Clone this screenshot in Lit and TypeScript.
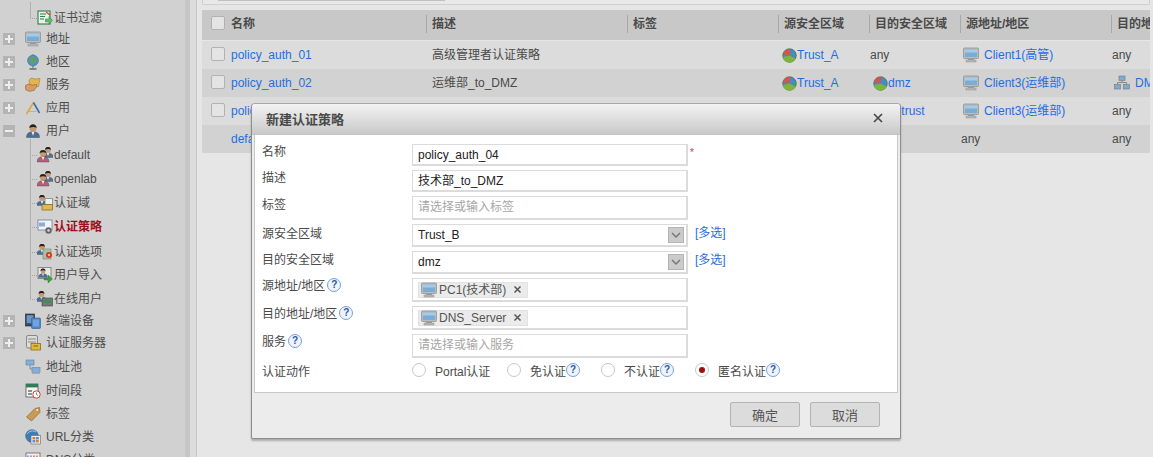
import { LitElement, html, css, svg, TemplateResult } from "lit";
import { customElement } from "lit/decorators.js";
import { classMap } from "lit/directives/class-map.js";

const ic = (body: unknown, size = 16) =>
  html`<svg class="ic" width="${size}" height="${size}" viewBox="0 0 16 16">${body}</svg>`;

const person = (x: number, y: number, coat = "#4a6f96", s = 1.25) => svg`
  <g transform="translate(${x} ${y}) scale(${s})">
  <path d="M-5 10c0-3.2 2-4.4 5-4.4s5 1.2 5 4.4z" fill="${coat}" stroke="#2f3f50" stroke-width=".3"/>
  <path d="M-1.2 5.6h2.4l-1.2 3z" fill="#eee"/>
  <circle cx="0" cy="2.8" r="2.7" fill="#c89a74"/>
  <path d="M-2.8 2.6c0-3.6 5.6-3.6 5.6 0c-1.4-1-3.8-1-5.6 0z" fill="#222"/></g>`;

const icons: Record<string, () => TemplateResult> = {
  monitor: () => ic(svg`
    <rect x="0.5" y="1" width="15" height="10.5" rx="1" fill="#bcbcbc" stroke="#8b8b8b" stroke-width=".7"/>
    <rect x="2" y="2.5" width="12" height="7.5" fill="#79add6"/>
    <rect x="2" y="2.5" width="12" height="3" fill="#a5cbe6"/>
    <rect x="5" y="11.5" width="6" height="1.5" fill="#9c9c9c"/>
    <rect x="3" y="13" width="10" height="2" fill="#bbb" stroke="#8f8f8f" stroke-width=".5"/>`),
  globe: () => ic(svg`
    <circle cx="8" cy="6.5" r="5.4" fill="#4f93c4" stroke="#3a6d90" stroke-width=".6"/>
    <path d="M5 3.4l3-1 1.4 1.8-1.6 2 1.4 2.4-1.6 2-1.2-2.6-2-1.2zM10 5.6l2.4-.6.4 2.6-1.8 1.4z" fill="#6da243"/>
    <path d="M8 .3v1M8 12v2" stroke="#666"/><path d="M4.5 15h7" stroke="#666" stroke-width="1.5"/>`),
  service: () => ic(svg`
    <path d="M4 3.5l2-2.5 4 1 5-.5-1.5 8-8 .8z" fill="#e3b552" stroke="#a67e2a" stroke-width=".6"/>
    <path d="M.5 8.5l3-1.5 4 1.2 4-.8.4 1.8-2.6 4-4.6 1.2-4-1.6z" fill="#d89b62" stroke="#8f6235" stroke-width=".6"/>`),
  app: () => ic(svg`
    <path d="M1.5 14L8.5 2.5" stroke="#e0a82c" stroke-width="1.6"/>
    <path d="M8.5 2.5L14.5 13" stroke="#3d6ca8" stroke-width="1.6"/>
    <path d="M3.5 11.5h8" stroke="#aaa" stroke-width=".8"/>`),
  user: () => ic(svg`${person(8, 1.5, "#4a6f96", 1.3)}`),
  pair: () => ic(svg`${person(11, 0, "#5a6f88", 1.05)}${person(6, 3, "#b45f74", 1.2)}`),
  domain: () => ic(svg`${person(5, 0, "#4a6f96", 1.05)}
    <rect x="8" y="3.5" width="7.5" height="6" fill="#eee" stroke="#777" stroke-width=".7"/>
    <rect x="5" y="9.5" width="10.5" height="5.5" fill="#e1b950" stroke="#7b6426" stroke-width=".7"/>`),
  policy: () => ic(svg`
    <rect x="1" y="1" width="14" height="10" fill="#eef3fa" stroke="#6d7f9a" stroke-width=".8"/>
    <path d="M3 3.5v4M5 3.5v4M7 3.5v4" stroke="#3a63a0" stroke-width="1"/>
    <circle cx="11.5" cy="11.5" r="3.2" fill="#666"/><circle cx="11.5" cy="11.5" r="1.2" fill="#ddd"/>`),
  option: () => ic(svg`${person(5, 0, "#4a6f96", 1.05)}
    <rect x="6" y="5" width="8" height="10" fill="#a8bfa8" stroke="#6f866f" stroke-width=".6"/>
    <circle cx="12" cy="11" r="3" fill="#d8332a"/><circle cx="12" cy="11" r="1.2" fill="#f6d24a"/>`),
  import: () => ic(svg`
    <rect x="1" y="0.5" width="13" height="11" fill="#e8e8e8" stroke="#777" stroke-width=".8"/>
    ${person(6, 1.5, "#4a6f96", .9)}
    <path d="M7 11h4V8l4.5 4-4.5 4v-3H7z" fill="#3f9e3a" stroke="#206f20" stroke-width=".4"/>`),
  online: () => ic(svg`${person(4.5, 0, "#4a6f96", 1.05)}
    <rect x="5" y="7" width="10.5" height="8" fill="#777" stroke="#444" stroke-width=".6"/>
    <rect x="6.5" y="9" width="7.5" height="3" fill="#3c8f5a"/>`),
  cert: () => ic(svg`
    <rect x="1" y="1" width="12" height="13" fill="#e9f1e6" stroke="#2f7d4b" stroke-width="1.1"/>
    <path d="M3 4h6M3 6.5h5M3 9h4" stroke="#2f7d4b"/>
    <path d="M9 2l4 3" stroke="#d83a2a" stroke-width="1.2"/>
    <path d="M8.5 9H12V6.5l3.5 3.8-3.5 4V12H8.5z" fill="#5fbf67" stroke="#2f7d4b" stroke-width=".5"/>`),
  terminal: () => ic(svg`
    <rect x="0.5" y="1" width="9" height="12" fill="#334a60" stroke="#222" stroke-width=".6"/>
    <rect x="1.7" y="2.2" width="6.6" height="8" fill="#6a97c4"/>
    <rect x="6.5" y="5" width="9" height="10.5" rx="1" fill="#4d85c8" stroke="#2d5a96" stroke-width=".6"/>
    <rect x="8" y="6.5" width="6" height="7" fill="#6fa4df"/>`),
  authsrv: () => ic(svg`
    <rect x="1.5" y="0.5" width="11" height="12.5" rx="1.5" fill="#dcdcdc" stroke="#666" stroke-width=".7"/>
    <path d="M3 4h8M3 7h8" stroke="#666" stroke-width=".7"/>
    <rect x="6" y="8.5" width="9.5" height="6.5" fill="#e2b83f" stroke="#7a6017" stroke-width=".7"/>
    <path d="M8.5 11h4.5" stroke="#7a6017"/>`),
  pool: () => ic(svg`
    <rect x="1" y="1" width="8" height="5" fill="#7fb1dc" stroke="#6a7f96" stroke-width=".6"/>
    <rect x="7" y="8.5" width="8" height="5" fill="#7fb1dc" stroke="#6a7f96" stroke-width=".6"/>
    <path d="M5 6v4h2" fill="none" stroke="#888"/><rect x="7" y="13.5" width="8" height="1.5" fill="#aaa"/>`),
  calendar: () => ic(svg`
    <rect x="1" y="1" width="12" height="13" fill="#f3f3f3" stroke="#555" stroke-width=".8"/>
    <rect x="1" y="1" width="12" height="3.4" fill="#2f7d57"/>
    <path d="M3 8h4M3 11h4" stroke="#333" stroke-width="1.2"/>
    <circle cx="11.5" cy="11.5" r="3.7" fill="#fff" stroke="#d23c30" stroke-width="1"/>
    <path d="M11.5 9.5v2l1.4 1" fill="none" stroke="#444" stroke-width=".7"/>`),
  tag: () => ic(svg`
    <path d="M1.5 11l8.5-8.5 4.5-1 .5 4.8L6.5 15z" fill="#c99a52" stroke="#8a6a34" stroke-width=".7"/>
    <circle cx="12.2" cy="4" r="1" fill="#eee"/>`),
  url: () => ic(svg`
    <circle cx="7" cy="7" r="6.3" fill="#3a7db8" stroke="#2a5e8c" stroke-width=".6"/>
    <path d="M2 5c2-3 6-4 9-2" stroke="#a8d0ee" fill="none"/>
    <rect x="6" y="6.5" width="9.5" height="8.5" fill="#eee" stroke="#666" stroke-width=".6"/>
    <rect x="7.5" y="8" width="2.8" height="2.5" fill="#d9802e"/><rect x="11" y="8" width="2.8" height="2.5" fill="#5a8fc7"/>
    <rect x="7.5" y="11" width="2.8" height="2.5" fill="#5a8fc7"/><rect x="11" y="11" width="2.8" height="2.5" fill="#d9802e"/>`),
  dns: () => ic(svg`
    <rect x="1" y="1" width="14" height="13" fill="#eee" stroke="#666" stroke-width=".8"/>
    <path d="M3 3.5v4M6 3.5v4" stroke="#3a63a0"/><path d="M9 3.5v4M12 3.5v4" stroke="#c0392b"/>`),
  zone: () => ic(svg`
    <circle cx="8" cy="8" r="7.2" fill="#3d8fc4" stroke="#4c6a3a" stroke-width=".8"/>
    <path d="M8 8L1.2 6.3A7 7 0 0 1 9 1.1z" fill="#d9534a"/>
    <path d="M8 8l6.4 3.2A7 7 0 0 1 1.1 9.5z" fill="#7fb23e"/>`),
  net: () => ic(svg`
    <rect x="5" y="1" width="6" height="4.5" fill="#79add6" stroke="#777" stroke-width=".6"/>
    <rect x="0.5" y="9.5" width="6" height="4.5" fill="#79add6" stroke="#777" stroke-width=".6"/>
    <rect x="9.5" y="9.5" width="6" height="4.5" fill="#79add6" stroke="#777" stroke-width=".6"/>
    <path d="M8 5.5v2M3.5 9.5v-2h9v2" fill="none" stroke="#888"/>`),
};

interface Node { icon: string; text: string; h: number; toggle?: "plus" | "minus"; child?: boolean; active?: boolean; last?: boolean }

const tree: Node[] = [
  { icon: "cert", text: "证书过滤", h: 21, child: true, last: true },
  { icon: "monitor", text: "地址", h: 23, toggle: "plus" },
  { icon: "globe", text: "地区", h: 23, toggle: "plus" },
  { icon: "service", text: "服务", h: 23, toggle: "plus" },
  { icon: "app", text: "应用", h: 23, toggle: "plus" },
  { icon: "user", text: "用户", h: 24, toggle: "minus" },
  { icon: "pair", text: "default", h: 24, child: true },
  { icon: "pair", text: "openlab", h: 24, child: true },
  { icon: "domain", text: "认证域", h: 24, child: true },
  { icon: "policy", text: "认证策略", h: 25, child: true, active: true },
  { icon: "option", text: "认证选项", h: 23, child: true },
  { icon: "import", text: "用户导入", h: 24, child: true },
  { icon: "online", text: "在线用户", h: 22, child: true, last: true },
  { icon: "terminal", text: "终端设备", h: 22, toggle: "plus" },
  { icon: "authsrv", text: "认证服务器", h: 24, toggle: "plus" },
  { icon: "pool", text: "地址池", h: 24 },
  { icon: "calendar", text: "时间段", h: 23 },
  { icon: "tag", text: "标签", h: 23 },
  { icon: "url", text: "URL分类", h: 23 },
  { icon: "dns", text: "DNS分类", h: 23 },
];

const cols = ["名称", "描述", "标签", "源安全区域", "目的安全区域", "源地址/地区", "目的地址/地区"];

const help = () => html`<span class="help">?</span>`;

@customElement("app-root")
export class AppRoot extends LitElement {
  static styles = css`
    :host { display: block; position: relative; width: 1153px; height: 457px; overflow: hidden;
      font: 12px "Liberation Sans", "Noto Sans CJK SC", sans-serif; color: #4a4a4a; background: #e6e6e6; }
    .page { display: flex; height: 457px; }
    .ic { flex: none; display: block; }
    .side { flex: none; width: 185px; padding-top: 10px; background: #d1d1d1; overflow: hidden; }
    .grip { flex: none; width: 5px; background: #c6c6c6; }
    .gap { flex: none; width: 6px; background: #dcdcdc; border-right: 1px solid #c6c6c6; }
    .row { display: flex; align-items: flex-start; position: relative; line-height: 16px; padding-left: 3px; white-space: nowrap; color: #4c4c4c; }
    .toggle { flex: none; width: 12px; height: 12px; margin-top: 2px; background: #b4b4b4; position: relative; }
    .toggle::before { content: ""; position: absolute; left: 2px; right: 2px; top: 5px; height: 2px; background: #eee; }
    .toggle.plus::after { content: ""; position: absolute; top: 2px; bottom: 2px; left: 5px; width: 2px; background: #eee; }
    .toggle-slot { flex: none; width: 12px; }
    .row .ic { margin-left: 10px; margin-right: 5px; }
    .row.child { padding-left: 37px; }
    .row.child .ic { margin: 0 1px 0 0; }
    .row.child::before { content: ""; position: absolute; left: 30px; top: -8px; bottom: 0; width: 1px; background: #b0b0b0; }
    .row.child.last::before { bottom: auto; height: 17px; }
    .row.child::after { content: ""; position: absolute; left: 32px; top: 8px; width: 5px; border-top: 1px dotted #a4a4a4; }
    .active { color: #a0101c; font-weight: 700; }

    .main { flex: 1; min-width: 0; padding: 0 3px 0 5px; overflow: hidden; }
    .toolbar { height: 4px; border: 1px solid #d0d0d0; border-top: 0; background: #e8e8e8; padding-left: 15px; }
    .toolbar div { width: 227px; height: 1px; background: #c0c0c0; }
    .table { margin-top: 5px; overflow: hidden; }
    .tr { display: grid; grid-template-columns: 224px 201px 151px 91px 91px 151px 151px; height: 28px; align-items: center; white-space: nowrap; }
    .th { height: 30px; box-sizing: border-box; padding-bottom: 2px; margin-bottom: 1px; background: #c8c8c8; font-weight: 700; color: #4a4a4a; }
    .th .c { padding-left: 6px; position: relative; }
    .th .c + .c::before { content: ""; position: absolute; left: 0; top: -1px; height: 18px; width: 1px; background: #a8a8a8; }
    .th .c.first { padding-left: 9px; }
    .tr.a { background: #dcdcdc; }
    .tr.b { background: #d2d2d2; }
    .c { display: flex; align-items: center; min-width: 0; padding-left: 1px; height: 16px; line-height: 16px; }
    .c.first { padding-left: 9px; }
    .c.pad { padding-left: 6px; }
    .check { flex: none; width: 12px; height: 12px; margin: -2px 6px 0 0; border: 1px solid #b2b2b2; border-radius: 2px; background: #e4e4e4; }
    .check.none { visibility: hidden; }
    .link { color: #1f6ee0; }
    .zone .ic { width: 15px; height: 15px; margin-left: 3px; margin-right: 0; }
    .addr .ic { margin-left: 2px; margin-right: 5px; }

    .dialog { position: absolute; left: 251px; top: 103px; width: 650px; height: 336px; box-sizing: border-box;
      display: flex; flex-direction: column; border: 1px solid #8e8e8e; border-top-color: #a8a8a8; border-radius: 4px 4px 2px 2px; background: #ececec;
      box-shadow: 0 2px 2px rgba(0,0,0,.25); }
    .head { flex: none; height: 31px; box-sizing: border-box; display: flex; align-items: center; justify-content: space-between;
      padding: 0 17px 2px 14px; background: linear-gradient(#f3f3f3, #c9c9c9); border-bottom: 1px solid #c4c4c4;
      font-size: 13px; font-weight: 700; color: #4a4a4a; border-radius: 3px 3px 0 0; }
    .body { flex: none; margin: 0 2px; height: 258px; box-sizing: border-box; padding: 9px 0 0 7px; background: #fff;
      border: 1px solid #c8c8c8; border-top: 0; display: grid;
      grid-template-columns: 150px 276px 1fr; grid-template-rows: 22px 22px 24px 23px 23px 24px 24px 24px 24px;
      row-gap: 4px; align-content: start; }
    .label { display: flex; align-items: flex-start; gap: 2px; line-height: 16px; color: #4a4a4a; }
    .label.d1 { margin-top: 1px; }
    .label.d2 { margin-top: 2px; }
    .label.last { margin-top: 2px; }
    .field { box-sizing: border-box; border: 2px solid #dbdbdb; border-top-width: 1px; border-left-width: 1px; background: #fff; display: flex; align-items: center; padding: 0 5px; color: #222; line-height: 16px; position: relative; }
    .ph { color: #a6a6a6; align-items: flex-start; padding-top: 2px; }
    .arrow { position: absolute; right: 2px; top: 2px; width: 16px; height: 16px; box-sizing: border-box; background: #cbcbcb; border: 1px solid #b4b4b4; display: flex; align-items: center; justify-content: center; }
    .after { padding-left: 2px; line-height: 18px; }
    .star { color: #ee3344; font-size: 10px; }
    .multi { padding-left: 7px; color: #1f6ee0; }
    .chip { display: flex; align-items: center; width: 110px; height: 16px; box-sizing: border-box; background: #ebebeb; border: 1px solid #e2e2e2; color: #555; padding-left: 2px; }
    .chip .ic { margin-right: 2px; }
    .chip .name { flex: 1; white-space: nowrap; }
    .chip .x { flex: none; width: 9px; margin-right: 5px; display: block; }
    .help { flex: none; display: inline-block; box-sizing: border-box; width: 14px; height: 14px; border-radius: 50%;
      border: 1.5px solid #7aa0dc; background: #eef3fc; color: #2a5aa8; font-size: 10px; font-weight: 700; line-height: 11px; text-align: center; }
    .radios { grid-column: 2 / 4; display: flex; align-items: center; height: 24px; margin-top: -4px; color: #4a4a4a; }
    .radio { display: flex; align-items: center; }
    .dot { flex: none; width: 14px; height: 14px; box-sizing: border-box; border: 1px solid #c6c6c6; border-radius: 50%; background: #fff; margin-right: 9px; display: flex; align-items: center; justify-content: center; }
    .dot.on::before { content: ""; width: 6px; height: 6px; border-radius: 50%; background: #a00c0c; }
    .r1 { width: 95px; }
    .r2 { width: 94px; }
    .r3 { width: 94px; }
    .foot { flex: 1; display: flex; justify-content: flex-end; gap: 10px; padding: 9px 20px 0 0; align-items: flex-start; }
    .btn { box-sizing: border-box; width: 70px; height: 25px; display: flex; align-items: center; justify-content: center; background: #dcdcdc; border: 1px solid #b4b4b4; border-radius: 2px; color: #555; font-size: 13px; }
  `;

  private node(n: Node) {
    const slot = n.child ? null : n.toggle
      ? html`<span class=${classMap({ toggle: true, plus: n.toggle === "plus" })}></span>`
      : html`<span class="toggle-slot"></span>`;
    return html`<div class=${classMap({ row: true, child: !!n.child, last: !!n.last })} style="height:${n.h}px">
      ${slot}${icons[n.icon]()}<span class=${classMap({ active: !!n.active })}>${n.text}</span>
    </div>`;
  }

  private check(show = true) {
    return html`<span class=${classMap({ check: true, none: !show })}></span>`;
  }

  private zone(name: string) {
    return html`<div class="c zone">${icons.zone()}<span class="link">${name}</span></div>`;
  }

  private addr(name: string) {
    return html`<div class="c addr">${icons.monitor()}<span class="link">${name}</span></div>`;
  }

  private chip(name: string) {
    return html`<div class="chip">${icons.monitor()}<span class="name">${name}</span>
      <svg class="x" width="9" height="9" viewBox="0 0 9 9"><path d="M1.5 1.5l6 6M7.5 1.5l-6 6" stroke="#555" stroke-width="1.5"/></svg></div>`;
  }

  private arrow() {
    return html`<span class="arrow"><svg width="10" height="7" viewBox="0 0 10 7"><path d="M1 1l4 4 4-4" fill="none" stroke="#777" stroke-width="1.5"/></svg></span>`;
  }

  render() {
    return html`
      <div class="page">
        <div class="side">${tree.map((n) => this.node(n))}</div>
        <div class="grip"></div>
        <div class="gap"></div>
        <div class="main">
          <div class="toolbar"><div></div></div>
          <div class="table">
            <div class="tr th">
              ${cols.map((c, i) => i === 0
                ? html`<div class="c first">${this.check()}<span>${c}</span></div>`
                : html`<div class="c">${c}</div>`)}
            </div>
            <div class="tr a">
              <div class="c first">${this.check()}<span class="link">policy_auth_01</span></div>
              <div class="c pad">高级管理者认证策略</div><div class="c"></div>
              ${this.zone("Trust_A")}<div class="c">any</div>
              ${this.addr("Client1(高管)")}<div class="c">any</div>
            </div>
            <div class="tr b">
              <div class="c first">${this.check()}<span class="link">policy_auth_02</span></div>
              <div class="c pad">运维部_to_DMZ</div><div class="c"></div>
              ${this.zone("Trust_A")}${this.zone("dmz")}
              ${this.addr("Client3(运维部)")}
              <div class="c addr">${icons.net()}<span class="link">DMZ_Server</span></div>
            </div>
            <div class="tr a">
              <div class="c first">${this.check()}<span class="link">policy_auth_03</span></div>
              <div class="c pad"></div><div class="c"></div>
              ${this.zone("Trust_A")}${this.zone("untrust")}
              ${this.addr("Client3(运维部)")}<div class="c">any</div>
            </div>
            <div class="tr b">
              <div class="c first">${this.check(false)}<span class="link">default</span></div>
              <div class="c"></div><div class="c"></div><div class="c"></div><div class="c"></div>
              <div class="c">any</div><div class="c">any</div>
            </div>
          </div>
        </div>
      </div>

      <div class="dialog">
        <div class="head"><span>新建认证策略</span>
          <svg width="10" height="10" viewBox="0 0 10 10"><path d="M1 1l8 8M9 1l-8 8" stroke="#444" stroke-width="1.6"/></svg>
        </div>
        <div class="body">
          <div class="label">名称</div><div class="field">policy_auth_04</div><div class="after star">*</div>
          <div class="label">描述</div><div class="field">技术部_to_DMZ</div><div></div>
          <div class="label d1">标签</div><div class="field ph">请选择或输入标签</div><div></div>
          <div class="label d2">源安全区域</div><div class="field">Trust_B${this.arrow()}</div><div class="after multi">[多选]</div>
          <div class="label d1">目的安全区域</div><div class="field">dmz${this.arrow()}</div><div class="after multi">[多选]</div>
          <div class="label">源地址/地区${help()}</div><div class="field">${this.chip("PC1(技术部)")}</div><div></div>
          <div class="label">目的地址/地区${help()}</div><div class="field">${this.chip("DNS_Server")}</div><div></div>
          <div class="label">服务${help()}</div><div class="field ph">请选择或输入服务</div><div></div>
          <div class="label last">认证动作</div>
          <div class="radios">
            <div class="radio r1"><span class="dot"></span>Portal认证</div>
            <div class="radio r2"><span class="dot"></span>免认证${help()}</div>
            <div class="radio r3"><span class="dot"></span>不认证${help()}</div>
            <div class="radio"><span class="dot on"></span>匿名认证${help()}</div>
          </div>
        </div>
        <div class="foot"><div class="btn">确定</div><div class="btn">取消</div></div>
      </div>
    `;
  }
}
